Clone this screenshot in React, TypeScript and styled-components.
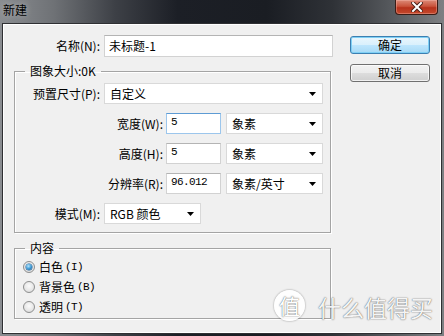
import styled, { createGlobalStyle } from "styled-components";

const GlobalStyle = createGlobalStyle`
  html, body {
    margin: 0;
    padding: 0;
  }
  body {
    width: 444px;
    height: 336px;
    overflow: hidden;
    font-family: "Noto Sans CJK SC", "Noto Sans", sans-serif;
    font-size: 12px;
    color: #000;
  }
`;

const Window = styled.div`
  position: relative;
  width: 444px;
  height: 336px;
  box-sizing: border-box;
  display: flex;
  flex-direction: column;
  padding: 0 2px 2px;
  background: linear-gradient(
    90deg,
    #8a8d91 0%,
    #6f7276 12%,
    #3d4046 26%,
    #1c1f26 40%,
    #1a1d23 60%,
    #2f3237 75%,
    #56595d 88%,
    #7e8083 100%
  );
`;

const TitleBar = styled.div`
  height: 23px;
  display: flex;
  align-items: flex-start;
  justify-content: space-between;
`;

const Title = styled.span`
  padding: 3px 0 0 1px;
  line-height: 14px;
  text-shadow: 0 0 6px rgba(255, 255, 255, 0.45);
`;

const CloseButton = styled.div`
  width: 43px;
  height: 15px;
  margin-right: 4px;
  box-sizing: border-box;
  display: flex;
  align-items: center;
  justify-content: center;
  border: 1px solid #3a1c16;
  border-top: none;
  border-radius: 0 0 4px 4px;
  background: linear-gradient(180deg, #dc8a78 0%, #c9533b 45%, #b6321c 55%, #c4492c 100%);
  box-shadow: inset 0 0 0 1px rgba(255, 200, 190, 0.35);
`;

const Client = styled.div`
  flex: 1;
  display: flex;
  padding: 11px 0 0 11px;
  border: 1px solid #2f3033;
  box-shadow: inset 0 0 0 1px #fff;
  background: #f0f0f0;
`;

const MainColumn = styled.div`
  width: 319px;
  display: flex;
  flex-direction: column;
`;

const SideColumn = styled.div`
  margin-left: 17px;
  padding-top: 1px;
  display: flex;
  flex-direction: column;
  gap: 10px;
`;

const Row = styled.div`
  display: flex;
  align-items: center;
  height: ${(p) => p.$h ?? 21}px;
`;

const Label = styled.label`
  width: ${(p) => p.$w}px;
  margin-right: ${(p) => p.$gap ?? 4}px;
  text-align: right;
  line-height: 14px;
  white-space: nowrap;
`;

const TextInput = styled.input`
  width: ${(p) => p.$w}px;
  height: ${(p) => p.$h ?? 21}px;
  box-sizing: border-box;
  margin: 0;
  padding: ${(p) => (p.$mono ? "0 4px 4px" : "0 4px 1px")};
  border: 1px solid ${(p) => (p.$focused ? "#9cc6ec" : "#d2d2d2")};
  border-top-color: ${(p) => (p.$focused ? "#5d9bd4" : "#b4b4b4")};
  background: #fff;
  outline: none;
  color: #000;
  font-family: ${(p) =>
    p.$mono ? `"Liberation Mono", monospace` : `"Noto Sans CJK SC", sans-serif`};
  font-size: ${(p) => (p.$mono ? 11 : 12)}px;
  letter-spacing: ${(p) => (p.$mono ? "-0.6px" : "0")};
`;

const Select = styled.div`
  width: ${(p) => p.$w}px;
  height: 21px;
  box-sizing: border-box;
  display: flex;
  align-items: center;
  justify-content: space-between;
  margin-left: ${(p) => p.$ml ?? 0}px;
  padding: 0 6px 0 5px;
  border: 1px solid #d9d9d9;
  background: #fff;
  line-height: 14px;
  white-space: nowrap;
`;

const Group = styled.fieldset`
  width: 317px;
  box-sizing: border-box;
  margin: ${(p) => p.$mt}px 0 0;
  padding: 0;
  min-width: 0;
  border: 1px solid #a4a4a4;
  box-shadow: inset 1px 1px 0 #fff, 1px 1px 0 #fff;
`;

const Legend = styled.legend`
  margin-left: 10px;
  padding: 0 5px;
  line-height: 14px;
`;

const GroupBody = styled.div`
  display: flex;
  flex-direction: column;
  gap: ${(p) => p.$gap}px;
  padding: ${(p) => p.$pad};
`;

const Button = styled.button`
  width: 80px;
  height: 18px;
  margin: 0;
  padding: 0;
  box-sizing: border-box;
  border-radius: 3px;
  font-family: "Noto Sans CJK SC", sans-serif;
  font-size: 12px;
  line-height: 14px;
  color: #000;
  border: 1px solid ${(p) => (p.$primary ? "#3c7fb1" : "#707070")};
  background: ${(p) =>
    p.$primary
      ? "linear-gradient(180deg, #eaf6fd 0%, #d9f0fc 50%, #bee6fd 51%, #a7d9f5 100%)"
      : "linear-gradient(180deg, #f2f2f2 0%, #ebebeb 50%, #dddddd 51%, #cfcfcf 100%)"};
  box-shadow: ${(p) =>
    p.$primary ? "inset 0 0 0 1px #7fd0f5" : "inset 0 0 0 1px rgba(255,255,255,0.7)"};
`;

const RadioRow = styled.div`
  display: flex;
  align-items: center;
  height: 20px;
  line-height: 14px;
`;

const Radio = styled.span`
  position: relative;
  width: 12px;
  height: 12px;
  margin-right: 4px;
  box-sizing: border-box;
  border-radius: 50%;
  border: 1px solid #8e8f8f;
  background: radial-gradient(circle at 50% 40%, #fbfbfb 0%, #e6e6e6 60%, #cfcfcf 100%);

  &::after {
    content: "";
    display: ${(p) => (p.$checked ? "block" : "none")};
    position: absolute;
    left: 2px;
    top: 2px;
    width: 6px;
    height: 6px;
    border-radius: 50%;
    background: radial-gradient(circle at 40% 35%, #b8e6fc 0%, #3f9bd6 50%, #114f88 100%);
    box-shadow: 0 0 0 0.5px #1a5a92;
  }
`;

const AccessKey = styled.span`
  margin-left: 2px;
  font-family: "Liberation Mono", monospace;
  font-size: 11px;
  letter-spacing: -0.6px;
`;

const Watermark = styled.div`
  position: absolute;
  left: 274px;
  top: 290px;
  display: flex;
  align-items: center;
  gap: 13px;
  pointer-events: none;
`;

const WatermarkBadge = styled.span`
  width: 31px;
  height: 31px;
  border-radius: 50%;
  display: flex;
  align-items: center;
  justify-content: center;
  background: rgba(255, 255, 255, 0.92);
  box-shadow: 0 0 2px rgba(0, 0, 0, 0.45);
  color: #fff;
  font-size: 21px;
  line-height: 1;
  text-shadow: 0 0 1px rgba(0, 0, 0, 0.6), 0 0 2px rgba(0, 0, 0, 0.3);
`;

const WatermarkText = styled.span`
  margin-top: 4px;
  color: rgba(255, 255, 255, 0.95);
  font-size: 23px;
  line-height: 1;
  text-shadow: 0 0 1px rgba(0, 0, 0, 0.6), 0 0 2px rgba(0, 0, 0, 0.3);
`;

function Arrow() {
  return (
    <svg width="7" height="4" viewBox="0 0 7 4">
      <polygon points="0,0 7,0 3.5,4" fill="#000" />
    </svg>
  );
}

function CloseGlyph() {
  return (
    <svg width="12" height="10" viewBox="0 0 12 10">
      <path d="M2 1 L10 9 M10 1 L2 9" stroke="#4a2018" strokeWidth="4" strokeLinecap="square" />
      <path d="M2 1 L10 9 M10 1 L2 9" stroke="#fff" strokeWidth="2" strokeLinecap="square" />
    </svg>
  );
}

export default function App() {
  return (
    <>
      <GlobalStyle />
      <Window>
        <TitleBar>
          <Title>新建</Title>
          <CloseButton>
            <CloseGlyph />
          </CloseButton>
        </TitleBar>
        <Client>
          <MainColumn>
            <Row $h={22}>
              <Label $w={86}>名称(N):</Label>
              <TextInput $w={229} $h={22} defaultValue="未标题-1" />
            </Row>

            <Group $mt={7}>
              <Legend>图象大小:0K</Legend>
              <GroupBody $gap={9} $pad="5px 0 8px">
                <Row>
                  <Label $w={85}>预置尺寸(P):</Label>
                  <Select $w={219}>
                    自定义
                    <Arrow />
                  </Select>
                </Row>
                <Row>
                  <Label $w={148} $gap={3}>宽度(W):</Label>
                  <TextInput $w={55} $mono $focused defaultValue="5" />
                  <Select $w={97} $ml={5}>
                    象素
                    <Arrow />
                  </Select>
                </Row>
                <Row>
                  <Label $w={148} $gap={3}>高度(H):</Label>
                  <TextInput $w={55} $mono defaultValue="5" />
                  <Select $w={97} $ml={5}>
                    象素
                    <Arrow />
                  </Select>
                </Row>
                <Row>
                  <Label $w={148} $gap={3}>分辨率(R):</Label>
                  <TextInput $w={55} $mono defaultValue="96.012" />
                  <Select $w={97} $ml={5}>
                    象素/英寸
                    <Arrow />
                  </Select>
                </Row>
                <Row>
                  <Label $w={85}>模式(M):</Label>
                  <Select $w={97}>
                    RGB 颜色
                    <Arrow />
                  </Select>
                </Row>
              </GroupBody>
            </Group>

            <Group $mt={8}>
              <Legend>内容</Legend>
              <GroupBody $gap={0} $pad="2px 0 1px 8px">
                <RadioRow>
                  <Radio $checked />
                  白色<AccessKey>(I)</AccessKey>
                </RadioRow>
                <RadioRow>
                  <Radio />
                  背景色<AccessKey>(B)</AccessKey>
                </RadioRow>
                <RadioRow>
                  <Radio />
                  透明<AccessKey>(T)</AccessKey>
                </RadioRow>
              </GroupBody>
            </Group>
          </MainColumn>

          <SideColumn>
            <Button $primary>确定</Button>
            <Button>取消</Button>
          </SideColumn>
        </Client>

        <Watermark>
          <WatermarkBadge>值</WatermarkBadge>
          <WatermarkText>什么值得买</WatermarkText>
        </Watermark>
      </Window>
    </>
  );
}
